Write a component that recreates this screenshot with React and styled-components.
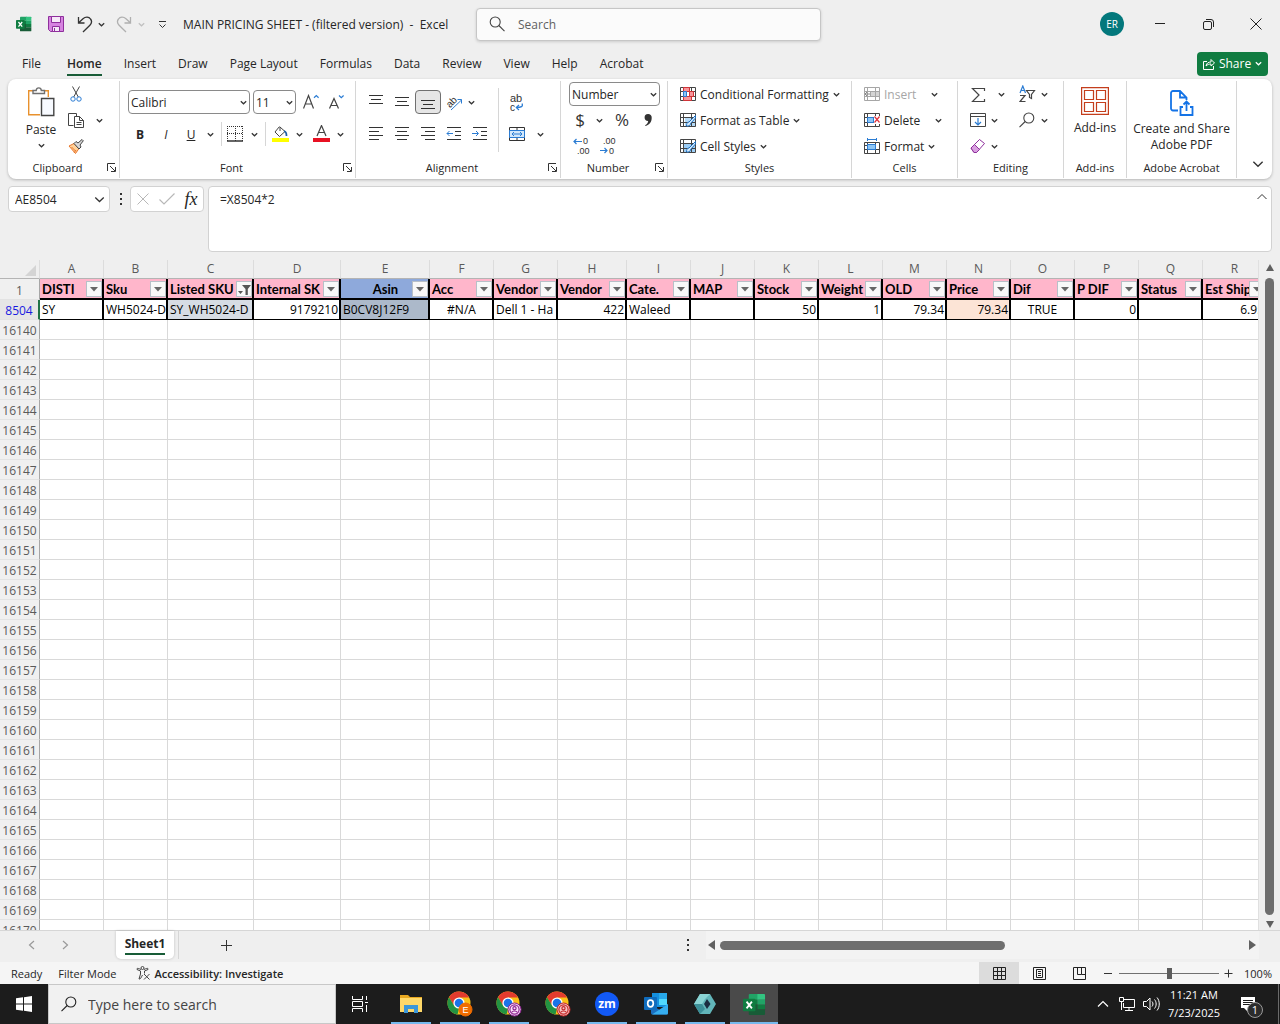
import styled, { createGlobalStyle, css } from "styled-components";

const GlobalStyle = createGlobalStyle`
    * {
        box-sizing: border-box;
    }

    body {
        margin: 0;
        font-family: "Open Sans", "Noto Sans", sans-serif;
        font-size: 12px;
        color: #262626;
        background-color: #efefef;
    }

    button, input, select, textarea {
        font: inherit;
        color: inherit;
    }

    button {
        display: inline-flex;
        align-items: center;
        justify-content: center;
        padding: 0;
        border: none;
        background: none;
        white-space: nowrap;
    }

    svg {
        display: block;
        flex-shrink: 0;
    }
`

const Window = styled.div`
    display: flex;
    flex-direction: column;
    height: 100vh;
    overflow: hidden;
`

/* ---------- title bar ---------- */

const TitleBar = styled.header`
    display: flex;
    align-items: center;
    height: 48px;
    flex-shrink: 0;
`

const QuickAccess = styled.div`
    display: flex;
    align-items: center;
    width: 476px;
    padding-left: 16px;
`

const DocTitle = styled.h1`
    margin: 0 0 0 4px;
    font-size: 12px;
    font-weight: 400;
    white-space: nowrap;
`

const SearchBox = styled.label`
    display: flex;
    align-items: center;
    gap: 13px;
    width: 345px;
    height: 33px;
    padding: 0 12px;
    background-color: #fbfbfb;
    border: 1px solid #c6c6c6;
    border-radius: 4px;
    box-shadow: 0 1px 3px rgba(0, 0, 0, 0.15);

    input {
        flex: 1;
        min-width: 0;
        padding: 0;
        border: none;
        outline: none;
        background: none;
    }

    input::placeholder {
        color: #616161;
        opacity: 1;
    }
`

const WindowControls = styled.div`
    display: flex;
    align-items: center;
    margin-left: auto;
`

const Avatar = styled.button`
    width: 24px;
    height: 24px;
    margin-right: 12px;
    border-radius: 50%;
    background-color: #03787c;
    color: #ffffff;
    font-size: 10px;
`

/* ---------- ribbon ---------- */

const Tabs = styled.nav`
    display: flex;
    align-items: center;
    gap: 22px;
    height: 31px;
    flex-shrink: 0;
    padding: 0 12px 0 22px;
`

const Tab = styled.a`
    padding-top: 2px;
    color: #262626;
    line-height: 20px;
    text-decoration: none;
    white-space: nowrap;
    border-bottom: 2px solid transparent;

    &:first-child {
        margin-right: 4px;
    }

    ${({ $active }) => $active && css`
        font-weight: 600;
        border-bottom-color: #185c37;
    `}
`

const ShareButton = styled.button`
    gap: 4px;
    width: 71px;
    height: 24px;
    margin-left: auto;
    border-radius: 4px;
    background-color: #107c41;
    color: #ffffff;
`

const RibbonPanel = styled.section`
    display: flex;
    height: 100px;
    flex-shrink: 0;
    margin: 0 8px;
    padding: 2px 0 1px;
    background-color: #ffffff;
    border-radius: 8px;
    box-shadow: 0 1px 3px rgba(0, 0, 0, 0.25);
`

const GroupBox = styled.div`
    display: flex;
    flex-direction: column;
    width: ${({ $w }) => $w}px;
    padding-left: ${({ $pad }) => $pad || 0}px;
    border-right: 1px solid #d6d6d6;
`

const GroupBody = styled.div`
    display: flex;
    height: 78px;
`

const GroupFoot = styled.div`
    display: flex;
    align-items: center;
    height: 16px;
    margin-left: -${({ $pad }) => $pad || 0}px;
    font-size: 11px;

    span {
        flex: 1;
        text-align: center;
        white-space: nowrap;
    }

    button {
        width: 12px;
        justify-content: flex-start;
    }
`

const Stack = styled.div`
    display: flex;
    flex-direction: column;
    width: ${({ $w }) => ($w ? `${$w}px` : "auto")};
    padding-top: ${({ $top }) => $top || 0}px;
`

const Row = styled.div`
    display: flex;
    align-items: center;
    height: ${({ $h }) => $h || 26}px;
`

const Tool = styled.button`
    width: ${({ $w }) => $w || 26}px;
    height: 24px;
    border-radius: 4px;

    ${({ $on }) => $on && css`
        background-color: #e6e6e6;
        border: 1px solid #707070;
    `}
`

const LabelTool = styled.button`
    gap: 4px;
    height: 24px;
    color: ${({ disabled }) => (disabled ? "#a6a6a6" : "#262626")};
`

const BigTool = styled.button`
    flex-direction: column;
    justify-content: flex-start;
    width: ${({ $w }) => $w}px;
    padding-top: 6px;
    line-height: 16px;
    white-space: normal;

    > svg:first-child {
        margin-bottom: 5px;
    }

    > svg:not(:first-child) {
        margin-top: 4px;
    }
`

const Rule = styled.span`
    width: 1px;
    height: ${({ $h }) => $h || 24}px;
    margin: 0 ${({ $gap }) => $gap || 3}px;
    background-color: #d6d6d6;
`

const SelectWrap = styled.span`
    display: flex;
    align-items: center;
    width: ${({ $w }) => $w}px;
    height: 24px;
    margin-right: 3px;
    padding-right: 2px;
    border: 1px solid #8a8a8a;
    border-radius: 4px;

    select {
        flex: 1;
        min-width: 0;
        padding: 0 0 0 2px;
        border: none;
        appearance: none;
        background: none;
    }
`

const RibbonEnd = styled.div`
    display: flex;
    flex: 1;
    align-items: flex-end;
    justify-content: center;
    padding: 0 0 8px 6px;
`

/* ---------- formula bar ---------- */

const FormulaBar = styled.section`
    display: flex;
    align-items: flex-start;
    height: 66px;
    flex-shrink: 0;
    margin: 7px 8px 8px;
`

const Field = styled.div`
    display: flex;
    align-items: center;
    width: ${({ $w }) => $w}px;
    height: 26px;
    background-color: #ffffff;
    border: 1px solid #d2d2d2;
    border-radius: 4px;

    input {
        flex: 1;
        min-width: 0;
        padding: 0 0 0 6px;
        border: none;
        background: none;
    }
`

const Dots = styled.span`
    display: flex;
    align-items: center;
    justify-content: center;
    width: 20px;
    height: 26px;
`

const FormulaInput = styled.div`
    display: flex;
    flex: 1;
    align-self: stretch;
    margin-left: 4px;
    background-color: #ffffff;
    border: 1px solid #d2d2d2;
    border-radius: 4px;

    textarea {
        flex: 1;
        padding: 5px 11px;
        border: none;
        resize: none;
        background: none;
        line-height: 16px;
    }

    button {
        width: 18px;
        height: 20px;
    }
`

const FxGlyph = styled.i`
    font-family: "Liberation Serif", serif;
    font-size: 18px;
    line-height: 20px;
`

/* ---------- grid ---------- */

const GridArea = styled.main`
    display: flex;
    flex: 1;
    min-height: 0;
`

const GridView = styled.div`
    flex: 1;
    min-width: 0;
    overflow: hidden;
    border-right: 1px solid #e0e0e0;
`

const Table = styled.table`
    min-width: 100%;
    width: 1267px;
    table-layout: fixed;
    border-collapse: separate;
    border-spacing: 0;
    background-color: #ffffff;

    th, td {
        padding: 0;
        overflow: hidden;
        white-space: nowrap;
    }
`

const ColHead = styled.th`
    height: 19px;
    background-color: #efefef;
    border-right: 1px solid #dcdcdc;
    border-bottom: 1px solid #b4b4b4;
    color: #5a5a5a;
    font-weight: 400;
    line-height: 17px;
    text-align: center;
    vertical-align: top;
`

const CornerMark = styled.svg`
    margin: 4px 0 0 24px;
`

const RowHead = styled.th`
    height: ${({ $h }) => $h || 20}px;
    background-color: #f0f0f0;
    border-right: 1px solid #a6a6a6;
    border-bottom: 1px solid #e3e3e3;
    color: #5a5a5a;
    font-weight: 400;
    line-height: 17px;
    text-align: center;
    vertical-align: bottom;

    ${({ $current }) => $current && css`
        background-color: #e6e6e6;
        border-right: 2px solid #217346;
        color: #1a1ae0;
    `}
`

const FieldHead = styled.th`
    position: relative;
    height: 21px;
    background-color: ${({ $blue }) => ($blue ? "#8ea9db" : "#ffb6cb")};
    border-right: 2px solid #000000;
    border-bottom: 2px solid #000000;
    color: #000000;
    font-family: Lato, "Open Sans", sans-serif;
    font-size: 13px;
    font-weight: 700;
    line-height: 18px;
    text-align: ${({ $blue }) => ($blue ? "center" : "left")};

    && {
        padding-left: 2px;
    }
`

const FilterButton = styled.button`
    position: absolute;
    right: 0;
    top: 2px;
    width: 16px;
    height: 16px;
    background-color: #f8f8f8;
    border: 1px solid #b8c0c8;
`

const Cell = styled.td`
    height: 20px;
    border-right: 1px solid #d9d9d9;
    border-bottom: 1px solid #d9d9d9;
`

const DataCell = styled.td`
    height: 20px;
    background-color: ${({ $fill }) => $fill || "#ffffff"};
    border-right: 2px solid #000000;
    border-bottom: 1px solid #000000;
    color: #000000;
    line-height: 18px;
    text-align: ${({ $align }) => $align || "left"};

    && {
        padding: 0 1px 0 2px;
    }
`

const VScroll = styled.div`
    display: flex;
    flex-direction: column;
    align-items: center;
    gap: 4px;
    width: 21px;
    padding: 4px 0 1px;
`

const Thumb = styled.div`
    border-radius: 5px;
    background-color: #6e6e6e;

    ${({ $vertical }) => ($vertical ? css`
        flex: 1;
        width: 9px;
    ` : css`
        width: 285px;
        height: 9px;
        margin-right: auto;
    `)}
`

/* ---------- sheet tabs and status bar ---------- */

const SheetBar = styled.section`
    display: flex;
    height: 32px;
    flex-shrink: 0;
    align-items: flex-start;
    padding-left: 15px;
    border-top: 1px solid #d6d6d6;

    > button, > span {
        height: 28px;
    }
`

const SheetNav = styled.button`
    width: 33px;
`

const SheetTab = styled.button`
    width: 58px;
    margin-left: 35px;
    background-color: #ffffff;
    border-radius: 0 0 5px 5px;
    box-shadow: 0 0 3px rgba(0, 0, 0, 0.2);
    font-weight: 700;

    span {
        line-height: 18px;
        border-bottom: 2px solid #185c37;
    }
`

const SheetGap = styled.div`
    flex: 1;
`

const HScroll = styled.div`
    display: flex;
    align-items: center;
    gap: 4px;
    width: 553px;
    height: 28px;
    margin: 0 21px 0 9px;
    padding-right: 2px;
    background-color: #f3f3f3;
`

const StatusBar = styled.footer`
    display: flex;
    align-items: center;
    height: 22px;
    flex-shrink: 0;
    padding: 0 8px 0 11px;
    background-color: #f5f5f5;
    font-size: 11px;
    white-space: nowrap;

    > span {
        margin-right: 16px;
    }
`

const Accessibility = styled.button`
    gap: 4px;
    margin: 0 auto 0 4px;
    font-weight: 600;
`

const ViewButton = styled.button`
    width: 40px;
    height: 22px;
    background-color: ${({ $on }) => ($on ? "#dcdcdc" : "transparent")};
`

const ZoomRange = styled.input`
    width: 100px;
    height: 16px;
    margin: 0 4px;
    appearance: none;
    background: linear-gradient(#707070, #707070) center / 100% 1px no-repeat;

    &::-webkit-slider-thumb {
        appearance: none;
        width: 5px;
        height: 11px;
        background-color: #5c5c5c;
    }
`

const ZoomValue = styled.button`
    margin-left: 11px;
`

/* ---------- taskbar ---------- */

const Taskbar = styled.footer`
    display: flex;
    height: 40px;
    flex-shrink: 0;
    background-color: #1c1c1c;
    color: #ffffff;
`

const TaskButton = styled.button`
    width: 48px;
    height: 40px;
`

const TaskSearch = styled.label`
    display: flex;
    align-items: center;
    gap: 11px;
    width: 288px;
    padding-left: 12px;
    background-color: #f1f1f1;
    border: 1px solid #c8c8c8;
    color: #333333;

    input {
        flex: 1;
        min-width: 0;
        padding: 0;
        border: none;
        background: none;
        font-size: 14px;
    }

    input::placeholder {
        color: #444444;
        opacity: 1;
    }
`

const AppButton = styled.button`
    width: ${({ $active }) => ($active ? 48 : 40)}px;
    height: 40px;
    margin-left: ${({ $active }) => ($active ? 5 : 9)}px;
    padding-top: 2px;
    border-bottom: 2px solid ${({ $running }) => ($running ? "#76b9ed" : "transparent")};
    background-color: ${({ $active }) => ($active ? "#4a4a4a" : "transparent")};

    &:first-of-type {
        margin-left: 7px;
    }
`

const Apps = styled.div`
    display: flex;
`

const Tray = styled.div`
    display: flex;
    align-items: center;
    margin-left: auto;
    padding-right: 1px;
`

const TrayButton = styled.button`
    width: 24px;
    height: 40px;
`

const Clock = styled.button`
    flex-direction: column;
    width: 62px;
    height: 40px;
    font-size: 11px;
    line-height: 18px;
`

const Notice = styled.button`
    position: relative;
    width: 54px;
    height: 40px;

    && {
        padding-right: 8px;
        border-right: 1px solid #6a6a6a;
    }

    span {
        position: absolute;
        left: 22px;
        top: 18px;
        width: 16px;
        height: 16px;
        border: 1px solid #9a9a9a;
        border-radius: 50%;
        background-color: #2c2c2c;
        font-size: 11px;
        line-height: 14px;
    }
`

/* ---------- icons ---------- */

const Icon = ({ w = 16, h = w, children, color = "#444444", sw = 1 }) => (
    <svg width={w} height={h} viewBox={`0 0 ${w} ${h}`} fill="none" stroke={color} strokeWidth={sw} aria-hidden="true">
        {children}
    </svg>
)

const Chevron = ({ color = "#333333", w = 7 }) => (
    <svg width={w} height={w} viewBox="0 0 7 7" fill="none" stroke={color} strokeWidth={w > 7 ? 0.8 : 1.2} aria-hidden="true">
        <path d="M.8 2.2 3.5 4.8 6.2 2.2" />
    </svg>
)

const Lines = ({ rows }) => (
    <Icon color="#333333">
        {rows.map(([x1, x2, y]) => <path key={y} d={`M${x1} ${y}.5H${x2}`} />)}
    </Icon>
)

const IconText = styled.text`
    font-family: "Liberation Sans", sans-serif;
    font-size: ${({ $size }) => $size}px;
    fill: ${({ $color }) => $color || "#333333"};
    stroke: none;
`

const ExcelLogo = ({ size = 16 }) => (
    <svg width={size} height={size} viewBox="0 0 24 24" aria-hidden="true">
        <path fill="#21a366" d="M7 1h9v6H6V2a1 1 0 0 1 1-1z" />
        <path fill="#33c481" d="M15 1h7a1 1 0 0 1 1 1v5h-8z" />
        <path fill="#107c41" d="M6 7h9v5H6zM15 12h8v5h-8z" />
        <path fill="#21a366" d="M15 7h8v5h-8z" />
        <path fill="#185c37" d="M6 12h9v5h8v5a1 1 0 0 1-1 1H7a1 1 0 0 1-1-1z" />
        <rect x="0" y="6" width="13" height="13" rx="1" fill="#107c41" />
        <path stroke="#ffffff" strokeWidth="1.9" d="m3.7 9 5.6 7M9.3 9l-5.6 7" />
    </svg>
)

const SaveIcon = () => (
    <Icon color="#8e2f9c">
        <path fill="#d683e0" d="M.5.5h15v15h-13l-2-2z" />
        <path fill="#f6e8f8" d="M3.5.5h9v6h-9zM4.5 10.5h7v5h-7z" />
        <path d="M6.5 12v3" />
    </Icon>
)

const UndoIcon = ({ flip, color }) => (
    <svg width="16" height="17" viewBox="0 0 16 17" fill="none" stroke={color} strokeWidth="1.3" aria-hidden="true">
        <g transform={flip ? "matrix(-1 0 0 1 16 0)" : undefined}>
            <path d="M1.500 1v6h6M1.700 6.800 6 2.800C8.500.5 12 .8 13.500 3c1.500 2 1 4.600-.6 6.200L6 16" />
        </g>
    </svg>
)

const SearchIcon = ({ size = 16, color = "#444444", flip }) => (
    <svg width={size} height={size} viewBox="0 0 16 16" fill="none" stroke={color} strokeWidth="1.1" aria-hidden="true">
        <g transform={flip ? "matrix(-1 0 0 1 16 0)" : undefined}>
            <circle cx="6.2" cy="6" r="5" />
            <path d="m9.8 9.5 5.700 5.700" />
        </g>
    </svg>
)

const PasteIcon = () => (
    <Icon w={28} h={30} sw={1.4}>
        <path stroke="#e8912d" d="M7 3.700H1.700v24H13M16 3.700h5.300V10" />
        <path stroke="#707070" fill="#ffffff" d="M6 6.500V3.500h3.200c.3-3.500 4.800-3.500 5.100 0h3.200v3z" />
        <path fill="#f7faff" d="M14.500 11.500h12.300v17H14.500z" />
    </Icon>
)

const ScissorsIcon = () => (
    <Icon w={12} h={16}>
        <path d="M2.500.5 8.300 11M9.500.5 3.700 11" />
        <circle cx="3" cy="13" r="2.2" stroke="#2b7cd3" />
        <circle cx="9" cy="13" r="2.2" stroke="#2b7cd3" />
    </Icon>
)

const CopyIcon = () => (
    <Icon w={16} h={16}>
        <path d="M8.500 1.500h-8v12h5M8.500 1.500V4M6.500 4.500h5l4 4v7h-9zM11.500 4.500v4h4M8.500 10.500h5M8.500 12.500h5" />
    </Icon>
)

const BrushIcon = () => (
    <Icon>
        <path fill="#ffd199" stroke="#e8772e" d="m1 8 5-2.500 5 5-3.500 5z" />
        <path stroke="#e8772e" d="m3.500 9 4 4M6 15l2-3" />
        <path fill="#d8d8d8" d="m6 5.500 2-2 2 1.500L14 1.500l1.300 1.300L12 7l1 2-2 2z" />
    </Icon>
)

const GrowFont = ({ down }) => (
    <Icon w={17} h={17} sw={1.2}>
        <path d={down ? "M1.500 14.500 6 4.500l4.500 10M3 11.500h6" : "M.5 14.500 5.500 1.500l5 13M2.300 10h6.400"} />
        <path stroke="#2b7cd3" d={down ? "m11 1.500 2.300 2.200L15.600 1.500" : "m11 3.700 2.300-2.200 2.300 2.200"} />
    </Icon>
)

const BordersIcon = () => (
    <Icon color="#333333">
        <path strokeDasharray="1 1" d="M0 .5h16M.5 0v15M15.500 0v15M8.500 0v15M0 7.500h16" />
        <path d="M0 15h16" strokeWidth="1.5" />
    </Icon>
)

const FillIcon = () => (
    <Icon w={17} h={18}>
        <path d="M7.500 1.500 3 7l4.500 4.500L13 6.500 8 2v4" />
        <path stroke="#1f5fa8" strokeWidth="1.8" d="M12 6c2 .5 2.500 2.500 2.500 5" />
        <path fill="#ffff00" stroke="none" d="M0 13h17v4H0z" />
    </Icon>
)

const FontColorIcon = () => (
    <Icon w={17} h={18}>
        <path strokeWidth="1.2" d="m4 11 4.500-10.500L13 11M5.500 7.500h6" />
        <path fill="#e81123" stroke="none" d="M0 13h17v4H0z" />
    </Icon>
)

const Glyphs = styled.span`
    font-size: 17px;
    line-height: 20px;
    color: #333333;
`

const RotateIcon = () => (
    <Icon w={17} h={17}>
        <IconText $size={10} x="0" y="11" transform="rotate(-45 6 8)">ab</IconText>
        <path stroke="#2b7cd3" d="M5 16 15.500 6M11.500 5.500h4v4" />
    </Icon>
)

const WrapIcon = () => (
    <Icon w={16} h={20}>
        <IconText $size={11} x="1" y="10">ab</IconText>
        <IconText $size={10} x="1" y="19">c</IconText>
        <path stroke="#2b7cd3" strokeWidth="1.2" d="M13 11.500c1.500 3-1 4-5.500 4M10 13l-2.700 2.500L10 18" />
    </Icon>
)

const IndentIcon = ({ right }) => (
    <Icon color="#333333">
        <path d="M1 1.500h14M9 5.500h6M9 9.500h6M1 13.500h14" />
        <path stroke="#2b7cd3" d={right ? "M0 7.500h6M4 5l2.500 2.500L4 10" : "M7 7.500H1M3.500 5 1 7.500 3.500 10"} />
    </Icon>
)

const MergeIcon = () => (
    <Icon color="#333333">
        <path d="M.5 1.500h15v13H.5zM8 1.500v3M8 12v3" />
        <path fill="#d3e8fb" stroke="#2b7cd3" d="M.5 4.500h15v7H.5zM3 8h10M5 6 3 8l2 2M11 6l2 2-2 2" />
    </Icon>
)

const DecimalIcon = ({ less }) => (
    <Icon w={17} h={18}>
        {less
            ? <IconText $size={9} x="4" y="7">.00</IconText>
            : <IconText $size={9} x="10" y="7">0</IconText>}
        {less
            ? <IconText $size={9} x="10" y="17">0</IconText>
            : <IconText $size={9} x="4" y="17">.00</IconText>}
        <path stroke="#2b7cd3" strokeWidth="1.2" d={less ? "M1 13.500h7M5.500 11 8 13.500 5.500 16" : "M9 4.500H1M3.500 2 1 4.500 3.500 7"} />
    </Icon>
)

const TableIcon = ({ kind }) => {
    const line = kind === "insert" ? "#a6a6a6" : "#444444"
    return (
        <Icon color={line}>
            {kind === "table" && <path fill="#b5dbf8" stroke="none" d="M5 6h11v9H5z" />}
            {kind === "styles" && <path fill="#9ccdf5" stroke="none" d="M4 5h11v10H4z" />}
            {kind === "insert" && <path fill="#d4d4d4" d="M6.500 5.500h9v5h-9z" />}
            <path d={kind === "format" ? "M.5 4.500h15v11H.5zM0 7.500h3M0 11.500h16M3.500 4v12M11.500 4v12" : "M.5 1.500h15v13H.5zM0 5.500h16M0 10.500h16M3.500 1v14M11.500 1v14"} />
            {kind === "conditional" && (
                <g stroke="#d13438" fill="#f7959b">
                    <path d="M3.500 1.500h6v4h-6zM3.500 10.500h8v4h-8z" />
                    <path fill="#8ec6f5" stroke="#2b7cd3" d="M3.500 5.500h3v5h-3z" />
                    <path d="M9.500 5.500h4v5h-4z" />
                </g>
            )}
            {kind === "delete" && <path fill="#8ec6f5" stroke="#2b7cd3" d="M3.500 5.500h6v5h-6z" />}
            {kind === "format" && <path fill="#8ec6f5" stroke="#2b7cd3" d="M3.500 6.500h8v5h-8z" />}
            {kind === "format" && <path stroke="#2b7cd3" d="M3.500 0v3M12.500 0v3M4 1.500h8" />}
            {(kind === "table" || kind === "styles") && (
                <path fill="#d9ecfb" stroke="#1f6fbf" d="M15.500 3.500 9 10c-2 0-2.500 2-2.500 4 2 .5 4-.5 4-2.500l5-5.500z" />
            )}
            {kind === "delete" && (
                <>
                    <path fill="#ffffff" stroke="none" d="M10 4h6v8h-6z" />
                    <path stroke="#e0323c" strokeWidth="1.2" d="m10.500 4.500 5 6M15.500 4.500l-5 6" />
                </>
            )}
            {kind === "insert" && <path stroke="#888888" d="M6 8H1M3 6 1 8l2 2" />}
        </Icon>
    )
}

const AddinsIcon = () => (
    <Icon w={28} color="#c43e1c" sw={1.2}>
        <path d="M.6.6h26.800v26.800H.6zM3.500 3.500h9v9h-9zM15.500 3.500h9v9h-9zM3.500 15.500h9v9h-9zM15.500 15.500h9v9h-9z" />
    </Icon>
)

const PdfIcon = () => (
    <Icon w={24} h={29} color="#1473e6" sw={1.8}>
        <path d="M8 23.500H3a2 2 0 0 1-2-2V6a2 2 0 0 1 2-2h7l6.500 6.500V13M10 4v6.500h6.500M13 20h-2.500v8h12v-8H20M16.500 24v-9M13.500 17.500l3-3 3 3" />
    </Icon>
)

const ChromeLogo = ({ badge, color, ring }) => (
    <svg width="26" height="26" viewBox="0 0 26 26" aria-hidden="true">
        <circle cx="12" cy="12" r="11.5" fill="#fbc116" />
        <path fill="#e33b2e" d="M2 6.300 7.200 15 12 6.500h10A11.500 11.500 0 0 0 2 6.300z" />
        <path fill="#229342" d="M2 6.300 7.300 15 12 17.500l-1.500 6A11.500 11.500 0 0 1 2 6.300z" />
        <circle cx="12" cy="12" r="5.6" fill="#ffffff" />
        <circle cx="12" cy="12" r="4.3" fill="#1a73e8" />
        <circle cx="18.5" cy="18.5" r="6.5" fill={color} stroke={ring} />
        {badge
            ? <IconText $size={9} $color="#ffffff" x="18.5" y="22" textAnchor="middle">{badge}</IconText>
            : (
                <g fill="none" stroke={ring} strokeWidth="1.2">
                    <circle cx="18.5" cy="18.5" r="4.6" />
                    <circle cx="18.5" cy="17.3" r="1.6" />
                    <path d="M15.500 21.500c1-2 5-2 6 0" />
                </g>
            )}
    </svg>
)

const FolderLogo = () => (
    <svg width="22" height="20" viewBox="0 0 22 20" aria-hidden="true">
        <path fill="#e8a820" d="M0 1h8l2 2h12v6H0z" />
        <path fill="#ffd869" d="M0 4h22v14H0z" />
        <path fill="#3d97d8" d="M4 19v-8h14v8h-4v-4H8v4z" />
    </svg>
)

const ZoomLogo = () => (
    <svg width="24" height="24" viewBox="0 0 24 24" aria-hidden="true">
        <circle cx="12" cy="12" r="12" fill="#1259f5" />
        <text x="12" y="16" textAnchor="middle" fill="#ffffff" fontSize="12" fontWeight="700">zm</text>
    </svg>
)

const OutlookLogo = () => (
    <svg width="25" height="24" viewBox="0 0 25 24" aria-hidden="true">
        <path fill="#1490df" d="M8 1h15v14H8z" />
        <path fill="#28a8ea" d="M15 1h8v7h-8z" />
        <path fill="#50d9ff" d="M15 7h8v6h-8z" />
        <path fill="#1b6fc0" d="m7 13 9 5 8-6v9a1.500 1.500 0 0 1-1.500 1.500h-14A1.500 1.500 0 0 1 7 21z" />
        <path fill="#36aef0" d="m24 12-16 10.500h14.500A1.500 1.500 0 0 0 24 21z" />
        <rect x="0" y="5" width="13" height="13" rx="1" fill="#0f6cbd" />
        <ellipse cx="6.5" cy="11.5" rx="2.8" ry="3.3" fill="none" stroke="#ffffff" strokeWidth="1.7" />
    </svg>
)

const HexLogo = () => (
    <svg width="22" height="22" viewBox="0 0 22 22" aria-hidden="true">
        <path fill="#62b5b9" d="M6 1h10l6 10-6 10H6L0 11z" />
        <path fill="#8ad3d3" d="M6 1h10l-5 5-3 5-8 0z" />
        <path fill="#3c8f98" d="M0 11h8l3 5-5 5z" />
        <path fill="#1b2c40" d="m13 6 3.500 5-3.500 5-3-5z" />
    </svg>
)

const DotsIcon = () => (
    <Icon w={3} h={12}><path fill="#333333" stroke="none" d="M1 0h2v2H1zM1 5h2v2H1zM1 10h2v2H1z" /></Icon>
)

const Arrow = ({ d, w = 10 }) => (
    <Icon w={w}><path fill="#606060" stroke="none" d={d} /></Icon>
)

/* ---------- data ---------- */

const tabs = ["File", "Home", "Insert", "Draw", "Page Layout", "Formulas", "Data", "Review", "View", "Help", "Acrobat"]

const columns = [
    { id: "A", w: 64, head: "DISTI", value: "SY" },
    { id: "B", w: 64, head: "Sku", value: "WH5024-D" },
    { id: "C", w: 86, head: "Listed SKU", value: "SY_WH5024-D", fill: "#d6dce4", filtered: true },
    { id: "D", w: 87, head: "Internal SK", value: "9179210", align: "right" },
    { id: "E", w: 89, head: "Asin", value: "B0CV8J12F9", fill: "#acb9ca", blue: true },
    { id: "F", w: 64, head: "Acc", value: "#N/A", align: "center" },
    { id: "G", w: 64, head: "Vendor", value: "Dell 1 - Ha" },
    { id: "H", w: 69, head: "Vendor", value: "422", align: "right" },
    { id: "I", w: 64, head: "Cate.", value: "Waleed" },
    { id: "J", w: 64, head: "MAP", value: "" },
    { id: "K", w: 64, head: "Stock", value: "50", align: "right" },
    { id: "L", w: 64, head: "Weight", value: "1", align: "right" },
    { id: "M", w: 64, head: "OLD", value: "79.34", align: "right" },
    { id: "N", w: 64, head: "Price", value: "79.34", align: "right", fill: "#fce4d6" },
    { id: "O", w: 64, head: "Dif", value: "TRUE", align: "center" },
    { id: "P", w: 64, head: "P DIF", value: "0", align: "right" },
    { id: "Q", w: 64, head: "Status", value: "" },
    { id: "R", w: 64, head: "Est Ship", value: "6.95", align: "right" },
]

const emptyRows = Array.from({ length: 31 }, (_, i) => 16140 + i)

/* ---------- parts ---------- */

const Group = ({ label, w, pad, launcher, children }) => (
    <GroupBox $w={w} $pad={pad}>
        <GroupBody>{children}</GroupBody>
        <GroupFoot $pad={pad}>
            <span>{label}</span>
            {launcher && (
                <button aria-label={`${label} settings`}>
                    <Icon w={9} color="#333333"><path d="M8 .5H.5V8M3 3l5 5M8.500 4v4.500H4" /></Icon>
                </button>
            )}
        </GroupFoot>
    </GroupBox>
)

const More = ({ w = 16, label }) => (
    <Tool $w={w} aria-label={`${label} options`}><Chevron /></Tool>
)

const Picker = ({ w, label, value }) => (
    <SelectWrap $w={w}>
        <select aria-label={label} defaultValue={value}>
            <option>{value}</option>
        </select>
        <Chevron />
    </SelectWrap>
)

const Ribbon = () => (
    <RibbonPanel>
        <Group label="Clipboard" w={112} pad={8} launcher>
            <BigTool $w={50}><PasteIcon />Paste<Chevron /></BigTool>
            <Stack>
                <Row><Tool $w={20} aria-label="Cut"><ScissorsIcon /></Tool></Row>
                <Row><Tool $w={20} aria-label="Copy"><CopyIcon /></Tool><More w={26} label="Copy" /></Row>
                <Row><Tool $w={20} aria-label="Format painter"><BrushIcon /></Tool></Row>
            </Stack>
        </Group>
        <Group label="Font" w={236} pad={8} launcher>
            <Stack $top={5}>
                <Row $h={32}>
                    <Picker w={122} label="Font name" value="Calibri" />
                    <Picker w={43} label="Font size" value="11" />
                    <Tool $w={24} aria-label="Increase font size"><GrowFont /></Tool>
                    <Tool $w={26} aria-label="Decrease font size"><GrowFont down /></Tool>
                </Row>
                <Row $h={32}>
                    <Tool $w={24}><b>B</b></Tool>
                    <Tool $w={28}><i>I</i></Tool>
                    <Tool $w={22}><u>U</u></Tool>
                    <More label="Underline" />
                    <Rule />
                    <Tool $w={20} aria-label="Borders"><BordersIcon /></Tool>
                    <More w={18} label="Borders" />
                    <Rule $gap={2} />
                    <Tool $w={24} aria-label="Fill color"><FillIcon /></Tool>
                    <More w={14} label="Fill color" />
                    <Tool $w={30} aria-label="Font color"><FontColorIcon /></Tool>
                    <More w={8} label="Font color" />
                </Row>
            </Stack>
        </Group>
        <Group label="Alignment" w={205} pad={7} launcher>
            <Stack $top={5}>
                <Row $h={32}>
                    <Tool aria-label="Top align"><Lines rows={[[1, 15, 1], [3, 13, 5], [1, 15, 9]]} /></Tool>
                    <Tool aria-label="Middle align"><Lines rows={[[1, 15, 3], [3, 13, 7], [1, 15, 11]]} /></Tool>
                    <Tool $on aria-label="Bottom align"><Lines rows={[[1, 15, 6], [3, 13, 10], [1, 15, 14]]} /></Tool>
                    <Tool aria-label="Orientation"><RotateIcon /></Tool>
                    <More w={8} label="Orientation" />
                </Row>
                <Row $h={32}>
                    <Tool aria-label="Align left"><Lines rows={[[1, 15, 1], [1, 11, 5], [1, 15, 9], [1, 11, 13]]} /></Tool>
                    <Tool aria-label="Center"><Lines rows={[[1, 15, 1], [3, 13, 5], [1, 15, 9], [3, 13, 13]]} /></Tool>
                    <Tool aria-label="Align right"><Lines rows={[[1, 15, 1], [5, 15, 5], [1, 15, 9], [5, 15, 13]]} /></Tool>
                    <Tool aria-label="Decrease indent"><IndentIcon /></Tool>
                    <Tool aria-label="Increase indent"><IndentIcon right /></Tool>
                </Row>
            </Stack>
            <Row $h={78}><Rule $h={64} $gap={5} /></Row>
            <Stack $top={5}>
                <Row $h={32}><Tool aria-label="Wrap text"><WrapIcon /></Tool></Row>
                <Row $h={32}><Tool aria-label="Merge and center"><MergeIcon /></Tool><More w={20} label="Merge" /></Row>
            </Stack>
        </Group>
        <Group label="Number" w={107} pad={8} launcher>
            <Stack>
                <Row><Picker w={91} label="Number format" value="Number" /></Row>
                <Row>
                    <Tool $w={22}><Glyphs>$</Glyphs></Tool>
                    <More label="Currency" />
                    <Tool $w={30}><Glyphs>%</Glyphs></Tool>
                    <Tool $w={22} aria-label="Comma style">
                        <Icon w={10} h={14}><path fill="#333333" stroke="none" d="M5 1a3.500 3.500 0 0 1 3.700 3.800C8.700 9 6.500 12 2.500 13l-.4-.8C4 11.300 5 10 5.200 8A3.500 3.500 0 1 1 5 1z" /></Icon>
                    </Tool>
                </Row>
                <Row>
                    <Tool $w={24} aria-label="Increase decimal"><DecimalIcon /></Tool>
                    <Tool $w={28} aria-label="Decrease decimal"><DecimalIcon less /></Tool>
                </Row>
            </Stack>
        </Group>
        <Group label="Styles" w={184} pad={12}>
            <Stack>
                <Row><LabelTool><TableIcon kind="conditional" />Conditional Formatting<Chevron /></LabelTool></Row>
                <Row><LabelTool><TableIcon kind="table" />Format as Table<Chevron /></LabelTool></Row>
                <Row><LabelTool><TableIcon kind="styles" />Cell Styles<Chevron /></LabelTool></Row>
            </Stack>
        </Group>
        <Group label="Cells" w={106} pad={12}>
            <Stack>
                <Row><LabelTool disabled><TableIcon kind="insert" />Insert</LabelTool><More w={36} label="Insert" /></Row>
                <Row><LabelTool><TableIcon kind="delete" />Delete</LabelTool><More w={36} label="Delete" /></Row>
                <Row><LabelTool><TableIcon kind="format" />Format<Chevron /></LabelTool></Row>
            </Stack>
        </Group>
        <Group label="Editing" w={106} pad={10}>
            <Stack $w={46}>
                <Row>
                    <Tool $w={20} aria-label="Sum"><Icon w={15}><path strokeWidth="1.2" d="M13.500 4V1.500h-12L8 8l-6.500 6.500h12V12" /></Icon></Tool>
                    <More w={26} label="Sum" />
                </Row>
                <Row>
                    <Tool $w={20} aria-label="Fill">
                        <Icon><path d="M.5 1.500h15v13H.5zM.5 4.500h15" /><path stroke="#2b7cd3" strokeWidth="1.2" d="M8 6v7M5 10l3 3 3-3" /></Icon>
                    </Tool>
                    <More w={12} label="Fill" />
                </Row>
                <Row>
                    <Tool $w={20} aria-label="Clear">
                        <Icon color="#8e2f9c"><path d="M1 10 9.500 1.500l5 4L6.500 14.500H4z" /><path fill="#d9a0e0" d="m1 10 3.500-3.500 5 5-3 3H4z" /></Icon>
                    </Tool>
                    <More w={12} label="Clear" />
                </Row>
            </Stack>
            <Stack>
                <Row>
                    <Tool aria-label="Sort and filter">
                        <Icon w={17} h={18}>
                            <path stroke="#2b7cd3" strokeWidth="1.2" d="M1 8 3.800 1 6.500 8M2 5.500h3.500" />
                            <path strokeWidth="1.2" d="M1 10.500h5l-5 6h5.500M7.500 5.500h8l-3 4v4l-2-1v-3z" />
                        </Icon>
                    </Tool>
                    <More w={8} label="Sort" />
                </Row>
                <Row>
                    <Tool aria-label="Find and select"><SearchIcon flip /></Tool>
                    <More w={8} label="Find" />
                </Row>
            </Stack>
        </Group>
        <Group label="Add-ins" w={63}>
            <BigTool $w={62}><AddinsIcon />Add-ins</BigTool>
        </Group>
        <Group label="Adobe Acrobat" w={110}>
            <BigTool $w={109}><PdfIcon />Create and Share Adobe PDF</BigTool>
        </Group>
        <RibbonEnd>
            <button aria-label="Ribbon display options"><Chevron w={12} /></button>
        </RibbonEnd>
    </RibbonPanel>
)

const Sheet = () => (
    <Table>
        <colgroup>
            <col width="40" />
            {columns.map(({ id, w }) => <col key={id} width={w} />)}
        </colgroup>
        <thead>
            <tr>
                <ColHead aria-label="Select all">
                    <CornerMark width="12" height="12" viewBox="0 0 12 12"><path fill="#d4d4d4" d="M12 1v11H1z" /></CornerMark>
                </ColHead>
                {columns.map(({ id }) => <ColHead key={id}>{id}</ColHead>)}
            </tr>
        </thead>
        <tbody>
            <tr>
                <RowHead $h={21}>1</RowHead>
                {columns.map(({ id, head, blue, filtered }) => (
                    <FieldHead key={id} $blue={blue}>
                        {head}
                        <FilterButton aria-label={`Filter ${head}`}>
                            {filtered
                                ? <Icon w={13}><path fill="#555555" stroke="none" d="M4 2h9L9.800 6v6H7.500V6zM0 8h5l-2.500 3z" /></Icon>
                                : <Icon w={8}><path fill="#666666" stroke="none" d="M0 2h8L4 6.500z" /></Icon>}
                        </FilterButton>
                    </FieldHead>
                ))}
            </tr>
            <tr>
                <RowHead $current>8504</RowHead>
                {columns.map(({ id, value, align, fill }) => (
                    <DataCell key={id} $align={align} $fill={fill}>{value}</DataCell>
                ))}
            </tr>
            {emptyRows.map((n) => (
                <tr key={n}>
                    <RowHead>{n}</RowHead>
                    {columns.map(({ id }) => <Cell key={id} />)}
                </tr>
            ))}
        </tbody>
    </Table>
)

const App = () => {
    return (
        <Window>
            <GlobalStyle />
            <TitleBar>
                <QuickAccess>
                    <ExcelLogo />
                    <Tool $w={48} aria-label="Save"><SaveIcon /></Tool>
                    <Tool $w={10} aria-label="Undo"><UndoIcon color="#333333" /></Tool>
                    <More w={22} label="Undo" />
                    <Tool $w={24} aria-label="Redo"><UndoIcon color="#b0b0b0" flip /></Tool>
                    <Tool $w={10} aria-label="Redo options"><Chevron color="#c0c0c0" /></Tool>
                    <Tool $w={33} aria-label="Customize toolbar">
                        <Icon w={9} color="#333333"><path d="M1 1.500h7M1.500 4.500l3 3 3-3" /></Icon>
                    </Tool>
                    <DocTitle>MAIN PRICING SHEET - (filtered version)&nbsp; -&nbsp; Excel</DocTitle>
                </QuickAccess>
                <SearchBox>
                    <SearchIcon />
                    <input placeholder="Search" aria-label="Search" />
                </SearchBox>
                <WindowControls>
                    <Avatar>ER</Avatar>
                    <TaskButton aria-label="Minimize"><Icon w={10} color="#222222"><path d="M0 4.500h10" /></Icon></TaskButton>
                    <TaskButton aria-label="Restore"><Icon w={11} color="#222222"><path d="M.5 4a1.500 1.500 0 0 1 1.500-1.500h5A1.500 1.500 0 0 1 8.500 4v5A1.500 1.500 0 0 1 7 10.500H2A1.500 1.500 0 0 1 .5 9zM3 .5h5A2.500 2.500 0 0 1 10.500 3v5" /></Icon></TaskButton>
                    <TaskButton aria-label="Close"><Icon w={12} color="#222222"><path d="m.5.5 11 11M11.500.5l-11 11" /></Icon></TaskButton>
                </WindowControls>
            </TitleBar>
            <Tabs>
                {tabs.map((tab) => <Tab key={tab} href="#" $active={tab === "Home"}>{tab}</Tab>)}
                <ShareButton>
                    <Icon w={12} color="#ffffff"><path d="M4 3.500H.5v8h10V8M3 8c.5-3 2.500-4 5-4V1.500L11.500 5 8 8V6C6 6 4.500 6.500 3 8z" /></Icon>
                    Share
                    <Chevron color="#ffffff" />
                </ShareButton>
            </Tabs>
            <Ribbon />
            <FormulaBar>
                <Field $w={102}>
                    <input aria-label="Name box" defaultValue="AE8504" />
                    <Tool $w={20} aria-label="Name box list"><Chevron w={11} /></Tool>
                </Field>
                <Dots><DotsIcon /></Dots>
                <Field $w={74}>
                    <Tool $w={24} aria-label="Cancel"><Icon w={12} color="#b8b8b8"><path d="m.5.5 11 11M11.500.5l-11 11" /></Icon></Tool>
                    <Tool $w={24} aria-label="Enter"><Icon color="#b8b8b8" sw={1.2}><path d="m.5 8.500 4.500 4.500L15.500 2.500" /></Icon></Tool>
                    <Tool $w={24} aria-label="Insert function"><FxGlyph>fx</FxGlyph></Tool>
                </Field>
                <FormulaInput>
                    <textarea aria-label="Formula" defaultValue="=X8504*2" />
                    <button aria-label="Collapse formula bar"><Icon w={10} color="#333333"><path d="M.5 7 5 2.500 9.500 7" /></Icon></button>
                </FormulaInput>
            </FormulaBar>
            <GridArea>
                <GridView><Sheet /></GridView>
                <VScroll>
                    <Arrow w={10} d="M5 0 9 7H1z" />
                    <Thumb $vertical />
                    <Arrow w={10} d="M1 2h8L5 9z" />
                </VScroll>
            </GridArea>
            <SheetBar>
                <SheetNav aria-label="Previous sheet"><Icon w={10} color="#999999" sw={1.2}><path d="M7 1 2.500 5 7 9" /></Icon></SheetNav>
                <SheetNav aria-label="Next sheet"><Icon w={10} color="#999999" sw={1.2}><path d="M3 1l4.500 4L3 9" /></Icon></SheetNav>
                <SheetTab><span>Sheet1</span></SheetTab>
                <Rule $gap={4} />
                <Tool $w={86} aria-label="New sheet"><Icon w={11} color="#333333"><path d="M5.500 0v11M0 5.500h11" /></Icon></Tool>
                <SheetGap />
                <Dots><DotsIcon /></Dots>
                <HScroll>
                    <Arrow d="M9 0v10L2 5z" />
                    <Thumb />
                    <Arrow d="M2 0v10l7-5z" />
                </HScroll>
            </SheetBar>
            <StatusBar>
                <span>Ready</span>
                <span>Filter Mode</span>
                <Accessibility>
                    <Icon w={14}>
                        <circle cx="6.5" cy="2" r="1.5" />
                        <path d="M1 3.500 4.500 5v3L3 13M12 3.500 8.500 5v2.500M1 3.500C.5 2 2 2 5 3.500M12 3.500c.5-1.500-1-1.500-4 0M3 13c1.500.5 2-1.500 3.500-4M8 8l5.500 5.500M13.500 8 8 13.500" />
                    </Icon>
                    Accessibility: Investigate
                </Accessibility>
                <ViewButton $on aria-label="Normal view"><Icon w={13} color="#222222"><path d="M.5.5h12v12H.5zM4.500 0v13M8.500 0v13M0 4.500h13M0 8.500h13" /></Icon></ViewButton>
                <ViewButton aria-label="Page layout view"><Icon w={13} color="#222222"><path d="M.5.5h12v12H.5zM3.500 2.500h6v8h-6zM5 4.500h3M5 6.500h3M5 8.500h3" /></Icon></ViewButton>
                <ViewButton aria-label="Page break view"><Icon w={13} color="#222222"><path d="M.5.5h12v12H.5zM4.500 0v7.500h4V0M8.500 7.500h4" /></Icon></ViewButton>
                <Tool $w={16} aria-label="Zoom out"><Icon w={9} color="#333333"><path d="M1 4.500h8" /></Icon></Tool>
                <ZoomRange type="range" aria-label="Zoom" min="0" max="200" defaultValue="100" />
                <Tool $w={10} aria-label="Zoom in"><Icon w={9} color="#333333"><path d="M.5 4.500h8M4.500.5v8" /></Icon></Tool>
                <ZoomValue>100%</ZoomValue>
            </StatusBar>
            <Taskbar>
                <TaskButton aria-label="Start">
                    <Icon><path fill="#ffffff" stroke="none" d="M0 2.300 7 1.300v6.200H0zM8 1.200 16 0v7.500H8zM0 8.500h7v6.200l-7-1zM8 8.500h8V16l-8-1.200z" /></Icon>
                </TaskButton>
                <TaskSearch>
                    <SearchIcon color="#222222" flip />
                    <input placeholder="Type here to search" aria-label="Type here to search" />
                </TaskSearch>
                <TaskButton aria-label="Task view">
                    <Icon color="#ffffff"><path d="M.5 0v3.500h10V0M.5 16v-3.500h10V16M.5 5.500h10v5H.5zM14.500 0v4M14.500 9v7M13 6.500h3" /></Icon>
                </TaskButton>
                <Apps>
                    <AppButton $running aria-label="File Explorer"><FolderLogo /></AppButton>
                    <AppButton $running aria-label="Chrome profile E"><ChromeLogo badge="E" color="#ef6c00" ring="#ef6c00" /></AppButton>
                    <AppButton $running aria-label="Chrome guest"><ChromeLogo color="#fbe4fb" ring="#8e2490" /></AppButton>
                    <AppButton aria-label="Chrome"><ChromeLogo color="#f7c6c6" ring="#c62828" /></AppButton>
                    <AppButton $running aria-label="Zoom"><ZoomLogo /></AppButton>
                    <AppButton $running aria-label="Outlook"><OutlookLogo /></AppButton>
                    <AppButton $running aria-label="Desktop app"><HexLogo /></AppButton>
                    <AppButton $running $active aria-label="Excel"><ExcelLogo size={23} /></AppButton>
                </Apps>
                <Tray>
                    <TrayButton aria-label="Hidden icons"><Icon w={12} color="#ffffff" sw={1.2}><path d="M1 8.500 6 3.500l5 5" /></Icon></TrayButton>
                    <TrayButton aria-label="Network"><Icon w={16} color="#ffffff"><path d="M5 3.500h10.500v8h-11V7M.5 1.500h4v4h-4zM2.500 5.500V14M10 12v2.500M6 14.500h8" /></Icon></TrayButton>
                    <TrayButton aria-label="Volume"><Icon w={17} h={16} color="#ffffff"><path d="M.5 5.500h3L7 2v12l-3.500-3.500h-3zM9 5.500c1.300 1.500 1.300 3.500 0 5M11.500 3.500c2.200 2.500 2.200 6.500 0 9M14 1.500c3 3.500 3 9.500 0 13" /></Icon></TrayButton>
                    <Clock><span>11:21 AM</span><span>7/23/2025</span></Clock>
                    <Notice aria-label="Notifications">
                        <Icon><path fill="#ffffff" stroke="none" d="M1 1h14v11H8v4l-4-4H1z" /><path stroke="#1c1c1c" d="M3 4.500h10M3 6.500h10M3 8.500h7" /></Icon>
                        <span>1</span>
                    </Notice>
                </Tray>
            </Taskbar>
        </Window>
    )
}

export default App
